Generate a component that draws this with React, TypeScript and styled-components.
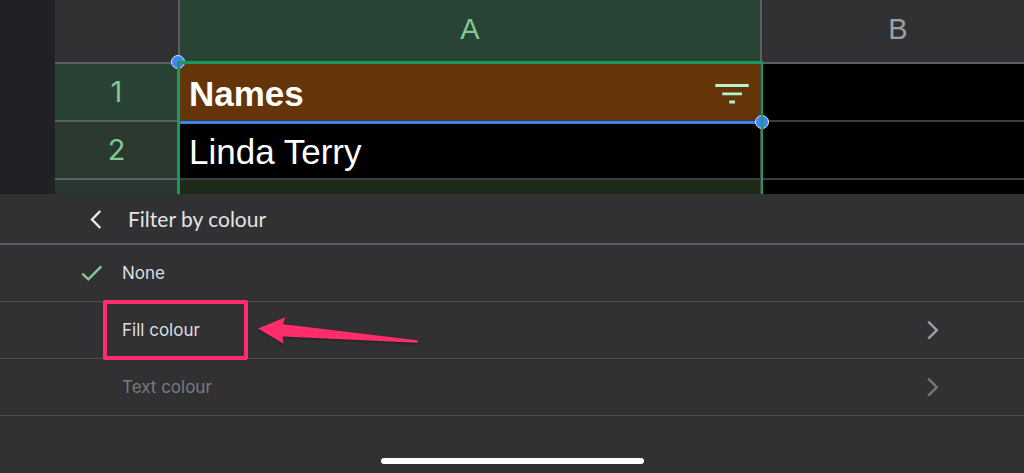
import React from "react";
import styled, { createGlobalStyle } from "styled-components";

const GlobalStyle = createGlobalStyle`
  *, *::before, *::after { box-sizing: border-box; }
  html { background: #313133; }
  body {
    margin: 0;
    background: #313133;
    color: #e3e3e6;
    font-family: Inter, Roboto, sans-serif;
  }
`;

const Page = styled.div`
  display: flex;
  flex-direction: column;
  min-height: 100vh;
  overflow: hidden;
`;

const Sheet = styled.section`
  position: relative;
  padding-left: 55px;
  background: #202124;
  overflow: hidden;
`;

const Grid = styled.table`
  width: 100%;
  table-layout: fixed;
  border-collapse: separate;
  border-spacing: 0;
`;

const Col = styled.col<{ $width?: number }>`
  width: ${(p) => (p.$width ? `${p.$width}px` : "auto")};
`;

const Row = styled.tr<{ $height: number }>`
  height: ${(p) => p.$height}px;
`;

const ColumnHead = styled.th<{ $selected?: boolean; $clipped?: boolean }>`
  padding: 0 0 4px ${(p) => (p.$clipped ? 10 : 0)}px;
  border-right: 2px solid #5b5e63;
  border-bottom: 2px solid #5b5e63;
  background: ${(p) => (p.$selected ? "#294334" : "#313133")};
  color: ${(p) => (p.$selected ? "#81c995" : "#9aa0a6")};
  font: 400 29px/32px "Liberation Sans", Arial, sans-serif;
  text-align: center;

  &:last-child { border-right: 0; }
`;

const Corner = styled.td`
  padding: 0;
  border-right: 2px solid #5b5e63;
  border-bottom: 2px solid #5b5e63;
  background: #313133;
`;

const RowHead = styled.th<{ $tone: string; $last?: boolean }>`
  padding: 0;
  border-right: 2px solid #5b5e63;
  border-bottom: ${(p) => (p.$last ? 0 : 2)}px solid #5b5e63;
  background: ${(p) => p.$tone};
  color: #81c995;
  font: 400 29px/32px Inter, sans-serif;
  text-align: center;
`;

const Cell = styled.td<{ $fill?: string; $bold?: boolean; $last?: boolean }>`
  padding: 0 11px 0 9px;
  border-right: 2px solid #3f4245;
  border-bottom: ${(p) => (p.$last ? 0 : 2)}px solid #3b3e41;
  background: ${(p) => p.$fill ?? "#000"};
  color: #fff;
  font: ${(p) => (p.$bold ? 700 : 400)} 35px/40px "Liberation Sans", Arial, sans-serif;
  white-space: nowrap;

  &:last-child { border-right: 0; }
`;

const CellContent = styled.div`
  display: flex;
  align-items: center;
  justify-content: space-between;
  padding-top: 4px;
`;

const FilterButton = styled.button`
  display: flex;
  padding: 0;
  border: 0;
  background: none;
`;

const SelectionLayer = styled.div`
  position: absolute;
  inset: 61px auto 0 177px;
  width: 586px;
  pointer-events: none;
`;

const ColumnOutline = styled.div`
  position: absolute;
  inset: 0;
  border: solid #179a60;
  border-width: 3px 2px 0 3px;
`;

const ActiveEdge = styled.div`
  position: absolute;
  top: 60px;
  left: 3px;
  right: 2px;
  height: 3px;
  background: #4081ec;
`;

const Handle = styled.span<{ $end?: boolean }>`
  position: absolute;
  top: ${(p) => (p.$end ? 54 : -6)}px;
  ${(p) => (p.$end ? "right: -6px;" : "left: -6px;")}
  width: 14px;
  height: 14px;
  border: 1px solid #d5e2f8;
  border-radius: 50%;
  background: #4285f4;
`;

const Panel = styled.main`
  display: flex;
  flex: 1;
  flex-direction: column;
  background: #313133;
`;

const PanelHeader = styled.header`
  display: flex;
  align-items: center;
  gap: 20px;
  height: 51px;
  padding-left: 84px;
  border-bottom: 2px solid #5a5d62;
`;

const BackButton = styled.button`
  display: flex;
  padding: 0;
  border: 0;
  background: none;
  color: #e8eaed;
`;

const Title = styled.h1`
  margin: 0;
  font: 400 21px/24px Lato, sans-serif;
`;

const Options = styled.ul`
  margin: 0;
  padding: 0;
  list-style: none;
`;

const Option = styled.li`
  position: relative;
  border-bottom: 1px solid #4d4d50;
`;

const OptionButton = styled.button`
  display: grid;
  grid-template-columns: 24px 1fr 24px;
  align-items: center;
  column-gap: 18px;
  width: 100%;
  height: 56px;
  padding: 0 80px;
  border: 0;
  background: none;
  color: #dddde0;
  font: 400 17px/24px Inter, sans-serif;
  text-align: left;

  &:disabled { color: #79797c; }
`;

const Label = styled.span`
  grid-column: 2;
`;

const Chevron = styled.svg`
  display: block;
  color: #9aa0a6;

  ${OptionButton}:disabled & { color: #76767a; }
`;

const Callout = styled.div`
  position: absolute;
  top: -2px;
  left: 103px;
  width: 145px;
  height: 60px;
  border: 4px solid #ff2d6b;
  border-radius: 2px;
  pointer-events: none;
`;

const Arrow = styled.svg`
  position: absolute;
  top: 12px;
  left: 256px;
  overflow: visible;
  pointer-events: none;
  filter: drop-shadow(0 1px 1px rgba(0, 0, 0, 0.4));
`;

const Footer = styled.footer`
  display: flex;
  flex: 1;
  align-items: flex-end;
  justify-content: center;
  min-height: 57px;
  padding-bottom: 9px;
`;

const HomeIndicator = styled.div`
  width: 263px;
  height: 6px;
  border-radius: 3px;
  background: #fff;
`;

const ForwardIcon = () => (
  <Chevron width="24" height="24" viewBox="0 0 24 24" fill="none" aria-hidden="true">
    <path d="M8.3 3.7L16.8 12.2L8.3 20.7" stroke="currentColor" strokeWidth="2.4" />
  </Chevron>
);

export default function App() {
  return (
    <Page>
      <GlobalStyle />
      <Sheet>
        <Grid>
          <colgroup>
            <Col $width={125} />
            <Col $width={582} />
            <Col />
          </colgroup>
          <thead>
            <Row $height={64}>
              <Corner />
              <ColumnHead scope="col" $selected>A</ColumnHead>
              <ColumnHead scope="col" $clipped>B</ColumnHead>
            </Row>
          </thead>
          <tbody>
            <Row $height={58}>
              <RowHead scope="row" $tone="#294234">1</RowHead>
              <Cell $fill="#643509" $bold>
                <CellContent>
                  Names
                  <FilterButton type="button" aria-label="Filter column">
                    <svg width="34" height="24" viewBox="0 0 34 24" aria-hidden="true">
                      <path d="M0.3 3.5H33.7M7.3 11.8H27M14.3 20H20" stroke="#b9f2cf" strokeWidth="2.8" />
                    </svg>
                  </FilterButton>
                </CellContent>
              </Cell>
              <Cell />
            </Row>
            <Row $height={58}>
              <RowHead scope="row" $tone="#2c3930">2</RowHead>
              <Cell><CellContent>Linda Terry</CellContent></Cell>
              <Cell />
            </Row>
            <Row $height={14}>
              <RowHead $tone="#293731" $last />
              <Cell $fill="#1d2a17" $last />
              <Cell $last />
            </Row>
          </tbody>
        </Grid>
        <SelectionLayer>
          <ActiveEdge />
          <Handle />
          <Handle $end />
          <ColumnOutline />
        </SelectionLayer>
      </Sheet>
      <Panel>
        <PanelHeader>
          <BackButton type="button" aria-label="Back">
            <svg width="24" height="24" viewBox="0 0 24 24" fill="none" aria-hidden="true">
              <path d="M16.3 4L8 12.5L16.3 21" stroke="currentColor" strokeWidth="2.4" />
            </svg>
          </BackButton>
          <Title>Filter by colour</Title>
        </PanelHeader>
        <Options>
          <Option>
            <OptionButton type="button" aria-pressed="true">
              <svg width="24" height="24" viewBox="0 0 24 24" fill="none" aria-hidden="true">
                <path d="M2.3 12.6L8.3 18.4L21.3 5.4" stroke="#81c995" strokeWidth="2.4" />
              </svg>
              <Label>None</Label>
            </OptionButton>
          </Option>
          <Option>
            <OptionButton type="button">
              <Label>Fill colour</Label>
              <ForwardIcon />
            </OptionButton>
            <Callout />
            <Arrow width="164" height="32" viewBox="0 0 164 32" aria-hidden="true">
              <path
                d="M2 14.5L29.5 3.2L27 10.3Q31 10.8 36 11.2L161 26.3Q163 27.5 161 28.8L26.5 22.5L27.5 29.8Z"
                fill="#ff2d6b"
              />
            </Arrow>
          </Option>
          <Option>
            <OptionButton type="button" disabled>
              <Label>Text colour</Label>
              <ForwardIcon />
            </OptionButton>
          </Option>
        </Options>
        <Footer>
          <HomeIndicator />
        </Footer>
      </Panel>
    </Page>
  );
}
